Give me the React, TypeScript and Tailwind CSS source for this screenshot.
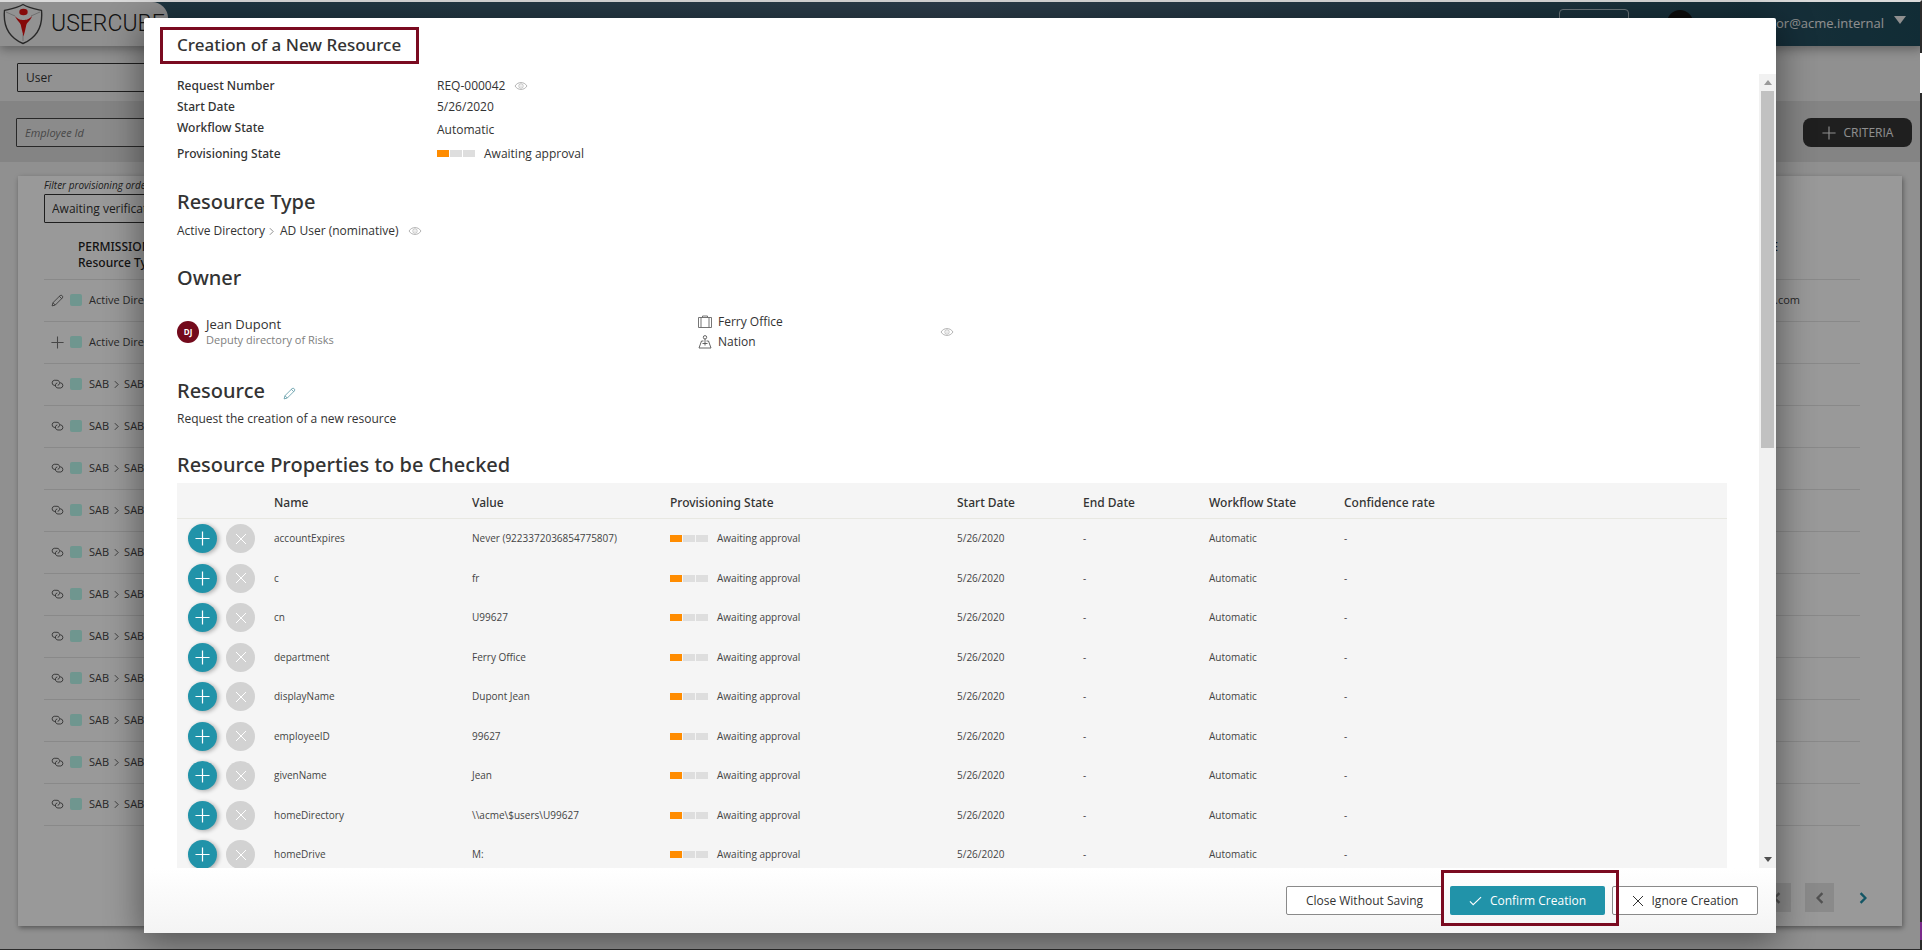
import type { ReactNode } from "react";

const properties = [
  ["accountExpires", "Never (9223372036854775807)"],
  ["c", "fr"],
  ["cn", "U99627"],
  ["department", "Ferry Office"],
  ["displayName", "Dupont Jean"],
  ["employeeID", "99627"],
  ["givenName", "Jean"],
  ["homeDirectory", "\\\\acme\\$users\\U99627"],
  ["homeDrive", "M:"],
];

const orders: { kind: "edit" | "add" | "link"; from: string; to: string; value: string }[] = [
  { kind: "edit", from: "Active Directory", to: "AD User", value: "@acme.com" },
  { kind: "add", from: "Active Directory", to: "AD User", value: "" },
  ...Array.from({ length: 11 }, () => ({ kind: "link" as const, from: "SAB", to: "SAB", value: "" })),
];

function Eye() {
  return (
    <svg viewBox="0 0 14 10" className="h-[10px] w-[14px] shrink-0" fill="none" stroke="#aaaaaa" strokeWidth="0.9">
      <path d="M1 5C2.8 2.4 4.7 1.6 7 1.6S11.2 2.4 13 5C11.2 7.6 9.3 8.4 7 8.4S2.8 7.6 1 5Z" />
      <circle cx="7" cy="5" r="2.2" strokeWidth="0.7" />
      <circle cx="7" cy="5" r="0.6" fill="#a9a9a9" stroke="none" />
    </svg>
  );
}

function Pencil({ className }: { className: string }) {
  return (
    <svg viewBox="0 0 14 14" className={className} fill="none" stroke="currentColor" strokeWidth="0.8" strokeLinejoin="round">
      <path d="M1.2 12.8 2.1 9.4 9.8 1.7a1.8 1.8 0 0 1 2.5 2.5L4.6 11.9Z" />
      <path d="M2.1 9.4 4.6 11.9M9 2.5 11.500 5" />
    </svg>
  );
}

function Plus({ className }: { className: string }) {
  return (
    <svg viewBox="0 0 16 16" className={className} fill="none" stroke="currentColor" strokeWidth="1.3">
      <path d="M8 0.5V15.5M0.5 8H15.5" />
    </svg>
  );
}

function Cross({ className }: { className: string }) {
  return (
    <svg viewBox="0 0 12 12" className={className} fill="none" stroke="currentColor">
      <path d="M1 1 11 11M11 1 1 11" />
    </svg>
  );
}

function Chain() {
  return (
    <svg viewBox="0 0 14 12" className="h-3 w-[13px]" fill="none" stroke="currentColor" strokeWidth="0.9">
      <path d="M5 7.500H3.500A2.800 2.800 0 0 1 3.500 2H6.500A2.800 2.800 0 0 1 9.200 5.500A2.400 2.400 0 0 1 7.200 7.400" />
      <path d="M9.500 4.800H10.500A2.800 2.800 0 0 1 10.500 10.300H7.500A2.800 2.800 0 0 1 4.800 6.800A2.400 2.400 0 0 1 6.800 4.900" />
    </svg>
  );
}

function Chevron({ className }: { className: string }) {
  return (
    <svg viewBox="0 0 6 10" className={className} fill="none" stroke="currentColor">
      <path d="M1 1 5 5 1 9" />
    </svg>
  );
}

function Progress() {
  return (
    <span className="flex gap-px">
      <span className="h-[7px] w-3 bg-[#ff8c00]" />
      <span className="h-[7px] w-3 bg-[#dedede]" />
      <span className="h-[7px] w-3 bg-[#dedede]" />
    </span>
  );
}

function Heading({ children, className }: { children: ReactNode; className: string }) {
  return (
    <h3 className={`flex items-center font-['Noto_Sans','Open_Sans',sans-serif] text-[20px] leading-[30px] font-medium ${className}`}>
      {children}
    </h3>
  );
}

function Logo() {
  return (
    <svg viewBox="0 0 42 42" className="h-[42px] w-[42px] shrink-0">
      <path d="M21 1.5C27 5 33 6 39.5 7.5C41 23 36 34 21 40.5C6 34 1 23 2.5 7.5C9 6 15 5 21 1.5Z" fill="#f4f4f4" stroke="#444" strokeWidth="1.4" />
      <path d="M4 9 13 13M38 9 29 13M21 31V38" stroke="#aaa" strokeWidth="0.8" />
      <ellipse cx="21.500" cy="9" rx="4.200" ry="3.300" fill="#e01010" />
      <path d="M13 13C16 16.500 18.500 17 21.500 17S27 16.500 30 13C28.500 18 25 19 24.300 22C23.500 26 22.500 30 21.500 33.500C20.500 29 19.500 26 18.800 22C18 19 15 18 13 13Z" fill="#e01010" />
    </svg>
  );
}

function Background() {
  return (
    <div className="flex min-h-screen flex-col bg-[#f0f0f0] pt-[2px]">
      <header className="flex h-11 items-start bg-linear-to-r from-[#2d5769] via-[#4b677d] to-[#1d4a5a] shadow-[0_3px_10px_rgba(0,0,0,0.35)]">
        <div className="flex h-11 w-[168px] items-center gap-[7px] rounded-tr-2xl bg-[#f1f1f1] pl-[2px]">
          <Logo />
          <span className="font-['Roboto'] text-[23px] font-light text-[#222]">USERCUBE</span>
        </div>
        <div className="flex h-11 flex-1 justify-end pr-4 text-[#eee]">
          <div className="mt-[7px] h-7 w-[70px] rounded-sm border border-[#b8c8d0]" />
          <div className="mt-2 ml-[38px] size-[26px] rounded-full bg-[#161616]" />
          <div className="flex w-[213px] items-center justify-end gap-[10px] text-[13px]">
            <span>auditor@acme.internal</span>
            <svg viewBox="0 0 12 8" className="mb-2 h-2 w-3 fill-current"><path d="M0 0H12L6 8Z" /></svg>
          </div>
        </div>
      </header>
      <div className="flex h-[55px] items-center px-[17px] pt-[8px]">
        <input aria-label="Entity type" defaultValue="User" readOnly className="h-[29px] w-80 rounded-[1px] border border-[#333] bg-[#f4f4f4] px-2 text-[12px] text-[#333]" />
      </div>
      <div className="flex h-[61px] items-center justify-between bg-[#dcdcdc] pt-[2px] pr-[10px] pl-4">
        <input aria-label="Employee Id" placeholder="Employee Id" className="h-[29px] w-80 rounded-[1px] border border-[#444] bg-[#e8e8e8] px-2 text-[11px] italic placeholder:text-[#777]" />
        <button className="flex h-[29px] w-[109px] items-center justify-center gap-2 rounded-lg bg-[#353535] text-[12px] text-[#eee]">
          <Plus className="size-[14px]" /> CRITERIA
        </button>
      </div>
      <main className="mx-[18px] mt-[14px] mr-5 mb-6 flex flex-1 flex-col bg-white pr-[42px] pl-[26px] text-[#333] shadow-[1px_2px_5px_rgba(0,0,0,0.4)]">
        <label htmlFor="order-filter" className="h-[18px] pt-px text-[10px] leading-4 italic">Filter provisioning orders</label>
        <select id="order-filter" className="h-[29px] w-80 appearance-none rounded-[1px] border border-[#333] px-[7px] text-[12px]">
          <option>Awaiting verification</option>
        </select>
        <table className="mt-4 w-full text-left">
          <thead className="font-['Noto_Sans','Open_Sans',sans-serif]">
            <tr className="h-10 border-b border-[#e4e4e4] align-top text-[12px] leading-4 text-[#222]">
              <th className="pl-[34px] font-medium">PERMISSIONS<br />Resource Type</th>
              <th className="pr-[82px] text-right font-medium">VALUE</th>
            </tr>
          </thead>
          <tbody>
            {orders.map((o, i) => (
              <tr key={i} className="h-[42px] border-b border-[#e4e4e4] text-[11px] text-[#444]">
                <td>
                  <span className="flex items-center pl-[7px]">
                    {o.kind === "edit" && <Pencil className="size-[13px]" />}
                    {o.kind === "add" && <Plus className="size-[13px] text-[#777]" />}
                    {o.kind === "link" && <Chain />}
                    <span className="mr-[7px] ml-[6px] size-3 rounded-[2px] bg-[#b9fbee]" />
                    {o.from}
                    <Chevron className="mx-[5px] h-[9px] w-[5px]" />
                    {o.to}
                  </span>
                </td>
                <td className="pr-[60px] text-right">{o.value}</td>
              </tr>
            ))}
          </tbody>
        </table>
        <nav aria-label="Pages" className="mt-auto mb-[14px] -mr-[17px] flex justify-end gap-[14px]">
          <button aria-label="First page" className="flex size-[29px] items-center justify-center bg-[#e6e6e6] text-[#888]"><Chevron className="h-3 w-2 rotate-180 stroke-2" /></button>
          <button aria-label="Previous page" className="flex size-[29px] items-center justify-center bg-[#e6e6e6] text-[#888]"><Chevron className="h-3 w-2 rotate-180 stroke-2" /></button>
          <button aria-label="Next page" className="flex size-[29px] items-center justify-center text-[#218fa8]"><Chevron className="h-3 w-2 stroke-2" /></button>
        </nav>
      </main>
    </div>
  );
}

function Term({ children }: { children: ReactNode }) {
  return <dt className="w-[260px] self-start font-['Noto_Sans','Open_Sans',sans-serif] leading-[21px] font-medium">{children}</dt>;
}

function Details() {
  return (
    <div className="min-w-0 flex-1 overflow-hidden pr-8 pl-[33px] text-[12px] text-[#333]">
      <dl className="pt-px">
        <div className="flex h-[21px] items-center">
          <Term>Request Number</Term>
          <dd className="flex items-center gap-[9px]">REQ-000042 <Eye /></dd>
        </div>
        <div className="flex h-[21px] items-center">
          <Term>Start Date</Term>
          <dd>5/26/2020</dd>
        </div>
        <div className="flex h-[26px] items-center">
          <Term>Workflow State</Term>
          <dd>Automatic</dd>
        </div>
        <div className="flex h-[21px] items-center">
          <Term>Provisioning State</Term>
          <dd className="flex items-center gap-[9px]"><Progress /> Awaiting approval</dd>
        </div>
      </dl>

      <Heading className="mt-[23px]">Resource Type</Heading>
      <p className="mt-1 flex h-5 items-center">
        Active Directory
        <Chevron className="mr-[6px] ml-1 h-[9px] w-[5px] text-[#777]" />
        AD User (nominative)
        <span className="ml-[9px]"><Eye /></span>
      </p>

      <Heading className="mt-[22px]">Owner</Heading>
      <div className="mt-[19px] flex h-10 items-center">
        <span className="mr-[7px] flex size-[22px] items-center justify-center rounded-full bg-[#730a1c] text-[8px] font-bold text-white">DJ</span>
        <div className="w-[492px] leading-4">
          <p className="text-[13px]">Jean Dupont</p>
          <p className="text-[11px] text-[#808080]">Deputy directory of Risks</p>
        </div>
        <div className="w-[242px] leading-5">
          <p className="flex items-center gap-[6px]">
            <svg viewBox="0 0 14 14" className="size-[14px]" fill="none" stroke="#666" strokeWidth="0.9"><path d="M0.500 2.500H13.500V12.500H0.500ZM3 2.500V12.500M11 2.500V12.500M4.500 2.500V1H9.500V2.500" /></svg>
            Ferry Office
          </p>
          <p className="flex items-center gap-[6px]">
            <svg viewBox="0 0 14 14" className="size-[14px]" fill="none" stroke="#555" strokeWidth="0.9"><circle cx="7" cy="2.300" r="1.700" /><path d="M7 4V10.500M5.500 6H3.500L1 13H13L10.500 6H8.500M4.500 8.500H9.500" /></svg>
            Nation
          </p>
        </div>
        <Eye />
      </div>

      <Heading className="mt-6">
        Resource
        <button aria-label="Edit resource" className="mt-1 ml-[18px] text-[#4d8f9c]"><Pencil className="size-[13px]" /></button>
      </Heading>
      <p className="mt-[3px] leading-5">Request the creation of a new resource</p>

      <Heading className="mt-[21px]">Resource Properties to be Checked</Heading>
      <table className="mt-[3px] w-full table-fixed bg-[#f5f5f5] text-left">
        <thead className="font-['Noto_Sans','Open_Sans',sans-serif]">
          <tr className="h-[35px] border-b border-[#e8e8e2] text-[12px] *:pt-[5px]">
            <th className="w-[97px]"><span className="sr-only">Decision</span></th>
            <th className="w-[198px] font-medium">Name</th>
            <th className="w-[198px] font-medium">Value</th>
            <th className="w-[287px] font-medium">Provisioning State</th>
            <th className="w-[126px] font-medium">Start Date</th>
            <th className="w-[126px] font-medium">End Date</th>
            <th className="w-[135px] font-medium">Workflow State</th>
            <th className="font-medium">Confidence rate</th>
          </tr>
        </thead>
        <tbody className="text-[10px] text-[#444]">
          {properties.map(([name, value]) => (
            <tr key={name} className="*:pt-px odd:h-10 even:h-[39px]">
              <td>
                <span className="flex items-center gap-[9px] pl-[11px]">
                  <button aria-label={`Approve ${name}`} className="flex size-[29px] items-center justify-center rounded-full bg-[#2193a9] text-white shadow-[2px_1px_4px_rgba(0,0,0,0.3)]"><Plus className="size-[15px]" /></button>
                  <button aria-label={`Refuse ${name}`} className="flex size-[29px] items-center justify-center rounded-full bg-[#d2d2d2] text-white"><Cross className="size-3" /></button>
                </span>
              </td>
              <td>{name}</td>
              <td>{value}</td>
              <td><span className="flex items-center gap-[9px]"><Progress /> Awaiting approval</span></td>
              <td>5/26/2020</td>
              <td>-</td>
              <td>Automatic</td>
              <td>-</td>
            </tr>
          ))}
        </tbody>
      </table>
    </div>
  );
}

export default function App() {
  return (
    <div className="relative h-screen overflow-hidden font-['Open_Sans','Noto_Sans',sans-serif]">
      <Background />
      <div className="absolute inset-0 border-t-2 border-r-2 border-b border-t-[#dadada] border-r-[#2b2b2b] border-b-[#2b2b2b] bg-black/40 bg-clip-padding" />
      <div className="absolute top-[53px] right-0 h-10 w-[2px] bg-white" />
      <div className="absolute right-0 bottom-[10px] h-[18px] w-[2px] bg-[#7a2a8a]" />

      <section role="dialog" aria-labelledby="dialog-title" className="absolute top-[18px] right-[146px] bottom-[17px] left-36 flex flex-col rounded-[2px] bg-white shadow-[0_6px_36px_2px_rgba(0,0,0,0.45)]">
        <div className="h-14 shrink-0 pt-[9px] pl-4">
          <h2 id="dialog-title" className="flex h-[37px] w-[259px] items-center border-3 border-[#7a0a20] pb-px pl-[14px] font-['Noto_Sans','Open_Sans',sans-serif] text-[17px] font-medium whitespace-nowrap text-[#333]">
            Creation of a New Resource
          </h2>
        </div>
        <div className="flex min-h-0 flex-1">
          <Details />
          <div className="flex w-[17px] flex-col items-center bg-[#f1f1f1]">
            <span className="flex h-[17px] shrink-0 items-center"><svg viewBox="0 0 8 5" className="h-[5px] w-2 fill-[#9a9a9a]"><path d="M4 0 8 5H0Z" /></svg></span>
            <span className="h-[45%] w-[13px] bg-[#c1c1c1]" />
            <span className="mt-auto flex h-[18px] shrink-0 items-center"><svg viewBox="0 0 8 5" className="h-[5px] w-2 fill-[#505050]"><path d="M0 0H8L4 5Z" /></svg></span>
          </div>
        </div>
        <footer className="flex h-[65px] shrink-0 items-start justify-end gap-[7px] bg-linear-to-b from-white to-[#f4f4f4] pt-[18px] pr-[18px] text-[12px] text-[#333]">
          <button className="h-[29px] w-[157px] rounded-[2px] border border-[#8a8a8a] bg-white">Close Without Saving</button>
          <div className="relative">
            <button className="flex h-[29px] w-[155px] items-center justify-center gap-2 rounded-[2px] bg-[#2193a9] text-white">
              <svg viewBox="0 0 14 10" className="h-[10px] w-[13px]" fill="none" stroke="currentColor" strokeWidth="1.2"><path d="M1 5.500 4.500 9 13 0.800" /></svg>
              Confirm Creation
            </button>
            <span className="pointer-events-none absolute -top-4 -right-[14px] -bottom-[11px] -left-[9px] z-10 border-3 border-[#7a0a20]" />
          </div>
          <button className="flex h-[29px] w-[146px] items-center justify-center gap-2 rounded-[2px] border border-[#8a8a8a] bg-white">
            <Cross className="size-3" /> Ignore Creation
          </button>
        </footer>
      </section>
    </div>
  );
}
